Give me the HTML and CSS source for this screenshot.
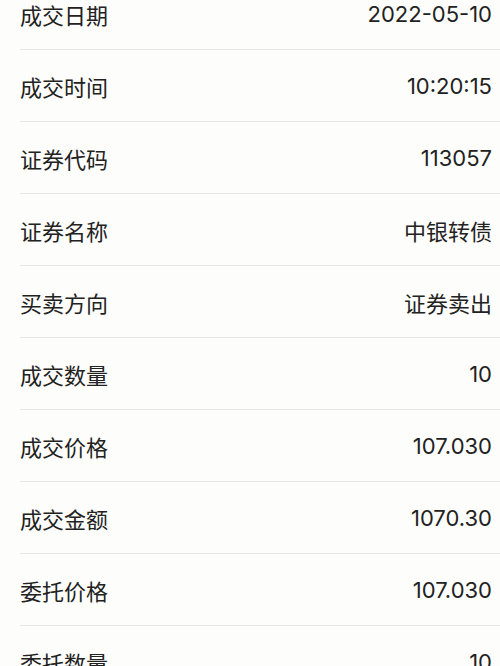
FILE: index.html
```html
<!DOCTYPE html>
<html lang="zh-CN">
<head>
    <meta charset="UTF-8">
    <meta name="viewport" content="width=device-width, initial-scale=1.0">
    <title>成交详情</title>
    <link rel="stylesheet" href="styles.css">
</head>
<body>
    <div class="detail-list">
        <div class="row"><span class="label">成交日期</span><span class="value">2022-05-10</span></div>
        <div class="row"><span class="label">成交时间</span><span class="value">10:20:15</span></div>
        <div class="row"><span class="label">证券代码</span><span class="value">113057</span></div>
        <div class="row"><span class="label">证券名称</span><span class="value">中银转债</span></div>
        <div class="row"><span class="label">买卖方向</span><span class="value">证券卖出</span></div>
        <div class="row"><span class="label">成交数量</span><span class="value">10</span></div>
        <div class="row"><span class="label">成交价格</span><span class="value">107.030</span></div>
        <div class="row"><span class="label">成交金额</span><span class="value">1070.30</span></div>
        <div class="row"><span class="label">委托价格</span><span class="value">107.030</span></div>
        <div class="row"><span class="label">委托数量</span><span class="value">10</span></div>
    </div>
</body>
</html>
```

FILE: styles.css
```css
body {
    margin: 0;
    background-color: #fdfdfb;
    font-family: Inter, "Noto Sans CJK SC", sans-serif;
    color: #222;
    overflow: hidden;
}

.detail-list {
    margin-top: -22px;
}

.row {
    display: flex;
    justify-content: space-between;
    align-items: center;
    height: 72px;
    box-sizing: border-box;
    margin-left: 20px;
    padding-right: 8px;
    border-bottom: 1px solid #e6e6e6;
    font-size: 22px;
}

.label {
    font-family: "Noto Sans CJK SC", sans-serif;
}
```
